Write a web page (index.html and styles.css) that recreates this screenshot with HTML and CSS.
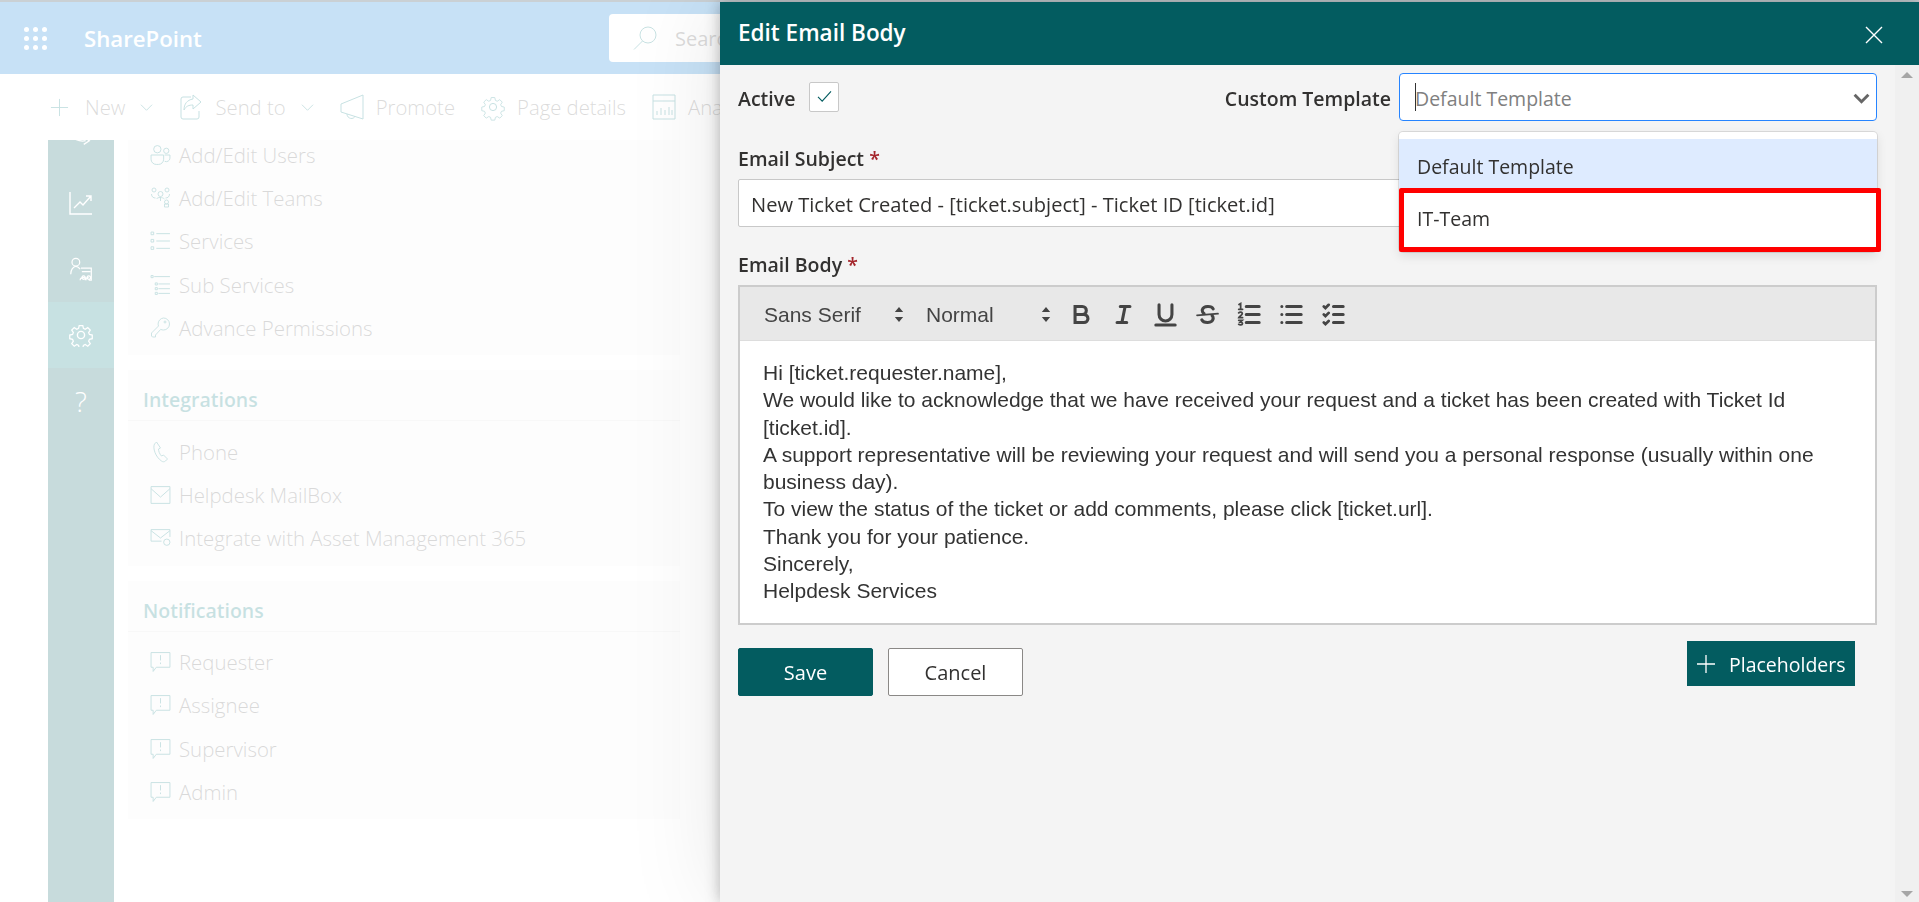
FILE: index.html
```html
<!DOCTYPE html>
<html lang="en">
<head>
<meta charset="utf-8">
<title>Edit Email Body</title>
<link rel="stylesheet" href="styles.css">
</head>
<body>
<svg class="sprite" width="0" height="0" aria-hidden="true">
  <symbol id="i-plus" viewBox="0 0 20 20"><path d="M10 1v18M1 10h18"/></symbol>
  <symbol id="i-chev" viewBox="0 0 14 14"><path d="M1 4l6 6 6-6"/></symbol>
  <symbol id="i-send" viewBox="0 0 24 28"><path d="M12 4H4a2 2 0 0 0-2 2v18a2 2 0 0 0 2 2h14a2 2 0 0 0 2-2v-6"/><path d="M14 2l8 7-8 7v-4c-4 0-7 1-9 5 0-6 3-10 9-11z"/></symbol>
  <symbol id="i-promote" viewBox="0 0 24 28"><path d="M23 2v24L1 19v-8z"/><path d="M7 21c0 5 7 6 8 2"/></symbol>
  <symbol id="i-gear" viewBox="0 0 24 24"><circle cx="12" cy="12" r="3.6"/><path d="M10 1.5h4l.7 3.2 2 .9 2.8-1.8 2.800 2.800-1.800 2.800.9 2 3.100.7v4l-3.100.7-.9 2 1.800 2.800-2.800 2.800-2.800-1.800-2 .9-.7 3.100h-4l-.7-3.100-2-.9-2.800 1.800-2.800-2.800 1.800-2.800-.9-2-3.100-.7v-4l3.100-.7.9-2-1.800-2.800 2.800-2.800 2.800 1.800 2-.9z" transform="translate(1.200 1.200) scale(.9)"/></symbol>
  <symbol id="i-analytics" viewBox="0 0 24 28"><path d="M1 2h22v24H1zM1 8h22"/><path d="M5 22v-4M9 22v-7M13 22v-5M17 22v-8M20 22v-5"/></symbol>
  <symbol id="i-users" viewBox="0 0 20 20"><circle cx="7" cy="4.500" r="3.500"/><circle cx="15.500" cy="6" r="2.500"/><path d="M1 10h12v4a5 5 0 0 1-5 5H6a5 5 0 0 1-5-5zM14 10h5v3a3.500 3.500 0 0 1-5 3"/></symbol>
  <symbol id="i-teams" viewBox="0 0 20 22"><circle cx="3.500" cy="3" r="2"/><circle cx="16.500" cy="3" r="2"/><circle cx="10" cy="7" r="2.500"/><path d="M1 7c0 3 2 4 4 4M19 7c0 3-2 4-4 4M6 12c1-2 6-2 8 0M10 10v4"/><circle cx="16" cy="15" r="2"/><path d="M14 20h4v-3h-4z"/></symbol>
  <symbol id="i-list" viewBox="0 0 20 20"><path d="M6 3h13M6 10h13M6 17h13"/><path d="M1 1.500h2.500V4H1zM1 8.500h2.500V11H1zM1 15.500h2.500V18H1z"/></symbol>
  <symbol id="i-sublist" viewBox="0 0 20 20"><path d="M4 2h15M8 9h11M8 13.500h11M8 18h11"/><path d="M1 1h2v2H1zM5 8h2v2H5zM5 12.500h2v2H5zM5 17h2v2H5z"/></symbol>
  <symbol id="i-key" viewBox="0 0 20 22"><path d="M13 1a6 6 0 0 1 0 12c-1 0-2-.2-2.800-.6L5 18v2H2l-1-1v-3l7-7c-.3-.8-.4-1.400-.4-2A6 6 0 0 1 13 1z"/><circle cx="14.500" cy="5" r="1"/></symbol>
  <symbol id="i-phone" viewBox="0 0 16 22"><path d="M4 1L2 3c-2 4 1 13 7 17 1 1 3 1 4 0l2-2-4-4-2 1c-2-2-3-5-3-7l2-1z"/></symbol>
  <symbol id="i-mail" viewBox="0 0 20 18"><path d="M1 1h18v16H1z"/><path d="M1 3l9 8 9-8"/></symbol>
  <symbol id="i-mailgear" viewBox="0 0 20 18"><path d="M11 12H1V1h18v7"/><path d="M1 2l9 7 9-7"/><circle cx="16" cy="13" r="3"/></symbol>
  <symbol id="i-chat" viewBox="0 0 20 20"><path d="M1 1h18v14H6l-3 4v-4H1z"/><path d="M10 3.500v5M10 10.500v1.500"/></symbol>
  <symbol id="i-chart" viewBox="0 0 24 24"><path d="M1 1v22h22"/><path d="M5 17l6-6 3 3 8-9M17 5h5v5"/></symbol>
  <symbol id="i-person" viewBox="0 0 26 28"><circle cx="7" cy="6" r="4.500"/><path d="M1 20c0-5 3-9 6-9 2 0 3 1 5 3"/><path d="M13 13h12v14h-3M14 17h10M16 22a2 2 0 1 0 .01 0M22 22a2 2 0 1 0 .01 0M12 27c0-2 2-3 4-3s3 1 3 3M18 27c0-2 2-3 4-3"/></symbol>
  <symbol id="i-route" viewBox="0 0 26 20"><path d="M4 0C1 3 1 9 6 12c4 2 8 3 12 2M16 10l6 4-6 4"/><path d="M20 4c2 1 3 2 3 4"/></symbol>
</svg>

<div class="page">
  <div class="strip"></div>
  <header class="suite">
    <div class="waffle"><i></i><i></i><i></i><i></i><i></i><i></i><i></i><i></i><i></i></div>
    <span class="brand">SharePoint</span>
    <div class="search">
      <svg class="search-icon" viewBox="0 0 24 24"><circle cx="15" cy="9" r="8"/><path d="M9.500 15L1 23.500"/></svg>
      <span>Search</span>
    </div>
  </header>
  <nav class="cmd">
    <span class="cmd-item cmd-new"><svg class="ic-cmd ic-plus"><use href="#i-plus"/></svg>New<svg class="ic-chev"><use href="#i-chev"/></svg></span>
    <span class="cmd-item"><svg class="ic-cmd"><use href="#i-send"/></svg>Send to<svg class="ic-chev"><use href="#i-chev"/></svg></span>
    <span class="cmd-item"><svg class="ic-cmd"><use href="#i-promote"/></svg>Promote</span>
    <span class="cmd-item"><svg class="ic-cmd"><use href="#i-gear"/></svg>Page details</span>
    <span class="cmd-item"><svg class="ic-cmd"><use href="#i-analytics"/></svg>Analytics</span>
  </nav>
  <div class="main">
    <div class="rail">
      <div class="rail-in">
        <div class="rail-item"><svg><use href="#i-route"/></svg></div>
        <div class="rail-item"><svg><use href="#i-chart"/></svg></div>
        <div class="rail-item"><svg><use href="#i-person"/></svg></div>
        <div class="rail-item active"><svg><use href="#i-gear"/></svg></div>
        <div class="rail-item q">?</div>
      </div>
    </div>
    <div class="settings">
      <section class="card card-first">
        <div class="row"><svg><use href="#i-users"/></svg>Add/Edit Users</div>
        <div class="row"><svg><use href="#i-teams"/></svg>Add/Edit Teams</div>
        <div class="row"><svg><use href="#i-list"/></svg>Services</div>
        <div class="row"><svg><use href="#i-sublist"/></svg>Sub Services</div>
        <div class="row"><svg><use href="#i-key"/></svg>Advance Permissions</div>
      </section>
      <section class="card">
        <h3>Integrations</h3>
        <div class="row"><svg><use href="#i-phone"/></svg>Phone</div>
        <div class="row"><svg><use href="#i-mail"/></svg>Helpdesk MailBox</div>
        <div class="row"><svg><use href="#i-mailgear"/></svg>Integrate with Asset Management 365</div>
      </section>
      <section class="card">
        <h3>Notifications</h3>
        <div class="row"><svg><use href="#i-chat"/></svg>Requester</div>
        <div class="row"><svg><use href="#i-chat"/></svg>Assignee</div>
        <div class="row"><svg><use href="#i-chat"/></svg>Supervisor</div>
        <div class="row"><svg><use href="#i-chat"/></svg>Admin</div>
      </section>
    </div>
  </div>
</div>
<div class="veil"></div>

<aside class="panel">
  <header class="panel-head">
    <h2>Edit Email Body</h2>
    <svg class="close" viewBox="0 0 18 18"><path d="M1 1l16 16M17 1L1 17"/></svg>
  </header>
  <div class="panel-body">
    <div class="form">
      <div class="top-row">
        <div class="active-field">
          <span class="lbl lbl-top">Active</span>
          <span class="checkbox"><svg viewBox="0 0 16 14"><path d="M1 7.500l4.500 4.500L15 1.500"/></svg></span>
        </div>
        <div class="template-field">
          <span class="lbl lbl-top">Custom Template</span>
          <div class="select">
            <span class="caret"></span><span class="placeholder">Default Template</span>
            <svg class="select-chev" viewBox="0 0 16 10"><path d="M1.500 1.500L8 8l6.500-6.500"/></svg>
            <div class="menu">
              <div class="opt opt-hi">Default Template</div>
              <div class="opt opt-red">IT-Team</div>
            </div>
          </div>
        </div>
      </div>
      <label class="lbl lbl-subject">Email Subject <em>*</em></label>
      <div class="textbox">New Ticket Created - [ticket.subject] - Ticket ID [ticket.id]</div>
      <label class="lbl lbl-body">Email Body <em>*</em></label>
      <div class="editor">
        <div class="toolbar">
          <span class="picker picker-font">Sans Serif<svg viewBox="0 0 12 20"><path d="M6 1l5 6H1zM6 19l5-6H1z"/></svg></span>
          <span class="picker picker-size">Normal<svg viewBox="0 0 12 20"><path d="M6 1l5 6H1zM6 19l5-6H1z"/></svg></span>
          <svg class="tb" viewBox="0 0 18 18"><path d="M5 4h4.500a2.500 2.500 0 0 1 0 5H5zM5 9h5.500a2.500 2.500 0 0 1 0 5H5z"/></svg>
          <svg class="tb" viewBox="0 0 18 18"><path d="M7 4h6M5 14h6M8 14l2-10"/></svg>
          <svg class="tb" viewBox="0 0 18 18"><path d="M5 3v6a4 4 0 0 0 8 0V3M3 15.500h12"/></svg>
          <svg class="tb" viewBox="0 0 18 18"><path class="thin" d="M15.500 8.500l-13 1"/><path d="M12.500 5.500C11.500 3.500 6.500 3.500 5.800 6c-.2 1 .2 1.800 1 2.400M5.500 12.300c1 2.200 6.500 2.400 7-.6.100-.8-.1-1.500-.6-2"/></svg>
          <svg class="tb" viewBox="0 0 18 18"><path d="M7 4h8M7 9h8M7 14h8"/><path class="thin" d="M2.500 2.800l1-.6v3.600M2.300 5.800h2.400M2.300 8c.8-.8 2.300-.5 2.200.5 0 .9-2 1.500-2.200 2.500h2.400M2.300 12.600h2.200l-1.200 1.200c1 0 1.400.4 1.300 1-.1.700-1.500.9-2.300.3"/></svg>
          <svg class="tb" viewBox="0 0 18 18"><path d="M6 4h9M6 9h9M6 14h9M3 4h.01M3 9h.01M3 14h.01"/></svg>
          <svg class="tb" viewBox="0 0 18 18"><path d="M9 4h6M9 9h6M9 14h6"/><path class="chk" d="M3 4l1 1 2-2M3 9l1 1 2-2M3 14l1 1 2-2"/></svg>
        </div>
        <div class="ql">
          <p>Hi [ticket.requester.name],</p>
          <p>We would like to acknowledge that we have received your request and a ticket has been created with Ticket Id [ticket.id].</p>
          <p>A support representative will be reviewing your request and will send you a personal response (usually within one business day).</p>
          <p>To view the status of the ticket or add comments, please click [ticket.url].</p>
          <p>Thank you for your patience.</p>
          <p>Sincerely,</p>
          <p>Helpdesk Services</p>
        </div>
      </div>
      <div class="actions">
        <div class="btns">
          <button class="btn btn-save">Save</button>
          <button class="btn btn-cancel">Cancel</button>
        </div>
        <button class="btn-ph"><svg viewBox="0 0 18 18"><path d="M9 0v18M0 9h18"/></svg>Placeholders</button>
      </div>
    </div>
    <div class="scrollbar"><i class="arrow-up"></i><i class="arrow-down"></i></div>
  </div>
</aside>
</body>
</html>
```

FILE: styles.css
```css
* { box-sizing: border-box; }
html, body { margin: 0; height: 100%; overflow: hidden; }
body { font-family: "Open Sans", "Noto Sans", sans-serif; background: #fff; color: #323130; }
.sprite { position: absolute; }
svg { fill: none; stroke: currentColor; display: block; }

.page { height: 902px; display: flex; flex-direction: column; }
.strip { height: 2px; background: #0f2a3c; }
.suite { height: 72px; background: #0078d4; display: flex; align-items: center; color: #fff; }
.waffle { margin-left: 24px; width: 24px; display: grid; grid-template-columns: repeat(3, 5px); gap: 4px; }
.waffle i { width: 5px; height: 5px; border-radius: 50%; background: #fff; }
.brand { margin-left: 36px; width: 525px; font-size: 22.200px; font-weight: 600; }
.search { width: 111px; height: 48px; background: #fff; border-radius: 4px 0 0 4px; display: flex; align-items: center; padding-left: 24px; color: #605e5c; font-size: 20px; overflow: hidden; white-space: nowrap; }
.search-icon { width: 24px; height: 24px; margin-right: 18px; color: #03787c; stroke-width: 1; flex: none; }

.cmd { width: 720px; height: 66px; overflow: hidden; display: flex; align-items: center; padding: 0 0 0 50px; font-size: 20.300px; font-weight: 300; color: #605e5c; gap: 26px; }
.cmd-item { display: flex; align-items: center; white-space: nowrap; flex: none; }
.ic-cmd { width: 24px; height: 28px; margin-right: 12px; color: #03787c; stroke-width: 1; }
.ic-plus { width: 19px; height: 19px; margin-right: 16px; }
.ic-chev { width: 13px; height: 13px; margin-left: 15px; color: #03787c; stroke-width: 1; }

.main { flex: 1; display: flex; min-height: 0; }
.rail { margin-left: 48px; width: 66px; background: #045c60; overflow: hidden; flex: none; }
.rail-in { margin-top: -36px; }
.rail-item { height: 66px; display: flex; align-items: center; justify-content: center; color: #fff; }
.rail-item svg { width: 24px; height: 24px; stroke-width: 1.400; }
.rail-item.active { background: #03787c; }
.rail-item.q { font-size: 28px; font-weight: 300; }

.settings { width: 552px; margin-left: 14px; display: flex; flex-direction: column; gap: 15px; }
.card { background: #f4f4f4; padding-bottom: 6px; }
.card-first { height: 215px; overflow: hidden; }
.card-first .row:first-child { margin-top: -6.600px; }
.card h3 { margin: 0; height: 51px; padding: 16px 0 0 15px; font-size: 19.500px; font-weight: 600; color: #03787c; border-bottom: 1px solid #ddd; line-height: 28px; }
.card h3 + .row { margin-top: 9px; }
.row { height: 43.200px; display: flex; align-items: center; padding-left: 22px; font-size: 20.400px; font-weight: 300; color: #555; white-space: nowrap; }
.row svg { width: 21px; height: 22px; margin-right: 8px; color: #03787c; stroke-width: .9; flex: none; }

.veil { position: fixed; inset: 0; background: rgba(255, 255, 255, .78); }

.panel { position: fixed; left: 720px; top: 2px; right: 0; bottom: 0; display: flex; flex-direction: column; background: #f4f4f4; box-shadow: 0 0 14px rgba(0, 0, 0, .28), 0 0 90px rgba(0, 0, 0, .1); }
.panel-head { height: 63px; flex: none; background: #035c60; color: #fff; display: flex; align-items: center; justify-content: space-between; padding: 0 36px 2px 18px; }
.panel-head h2 { margin: 0; font-size: 22.500px; font-weight: 600; }
.close { width: 18px; height: 18px; stroke-width: 1.400; margin-top: 4px; }
.panel-body { flex: 1; display: flex; min-height: 0; }
.form { flex: 1; padding: 8px 18px 0; min-width: 0; }
.scrollbar { width: 24px; background: #f0f0f0; position: relative; flex: none; }
.arrow-up, .arrow-down { position: absolute; left: 6px; width: 0; height: 0; border: 6px solid transparent; }
.arrow-up { top: 7px; border-bottom-color: #a6a6a6; border-top-width: 0; }
.arrow-down { bottom: 5px; border-top-color: #a6a6a6; border-bottom-width: 0; }

.lbl { font-size: 19.500px; font-weight: 600; color: #323130; line-height: 28px; display: block; }
.lbl em { color: #a4262c; font-style: normal; }
.lbl-top { padding-top: 3px; }
.top-row { height: 48px; display: flex; align-items: center; justify-content: space-between; }
.active-field { display: flex; align-items: center; }
.checkbox { margin-left: 14px; width: 30px; height: 30px; background: #fff; border: 1px solid #c8c8c8; border-radius: 2px; display: flex; align-items: center; justify-content: center; color: #035c60; margin-top: -1px; }
.checkbox svg { width: 15px; height: 13px; stroke-width: 1.200; }
.template-field { display: flex; align-items: center; gap: 8px; }
.select { position: relative; width: 478px; height: 48px; background: #fff; border: 1px solid #2684ff; border-radius: 4px; display: flex; align-items: center; padding-left: 15px; font-size: 19.500px; color: #808080; }
.caret { width: 1px; height: 28px; background: #333; flex: none; }
.placeholder { margin-left: -1px; padding-top: 2px; }
.select-chev { position: absolute; right: 6px; top: 19px; width: 17px; height: 11px; color: #666; stroke-width: 2.800; }
.menu { position: absolute; left: -1px; right: -1px; top: 58px; background: #fff; border-radius: 4px; padding-top: 7px; box-shadow: 0 0 0 1px rgba(0, 0, 0, .1), 0 4px 11px rgba(0, 0, 0, .1); color: #323130; z-index: 2; }
.opt { padding-left: 18px; display: flex; align-items: center; }
.opt-hi { height: 49px; background: #deebff; padding-top: 6px; }
.opt-red { height: 64px; margin-right: -4px; padding-left: 13px; background: #fff; border: 5px solid #f00; border-radius: 2px; padding-bottom: 4px; }

.lbl-subject { padding-top: 1px; margin-top: 23px; margin-bottom: 6px; }
.textbox { height: 48px; background: #fff; border: 1px solid #c8c8c8; border-radius: 2px; display: flex; align-items: center; padding: 2px 0 0 12px; font-size: 20.100px; color: #323130; }
.lbl-body { margin-top: 24px; margin-bottom: 6px; }

.editor { height: 340px; border: 2px solid #ccc; background: #fff; }
.toolbar { height: 54px; background: #e8e8e8; border-bottom: 1px solid #ddd; display: flex; align-items: center; padding: 2px 0 0 24px; font-family: "Liberation Sans", Arial, sans-serif; font-size: 21px; color: #444; }
.picker { display: flex; align-items: center; flex: none; }
.picker svg { width: 10px; height: 17px; fill: #444; stroke: none; }
.picker-font { width: 162px; }
.picker-font svg { margin-left: 33px; }
.picker-size { width: 141px; }
.picker-size svg { margin-left: 47px; }
.tb { width: 29px; height: 29px; margin-right: 13px; color: #444; stroke-width: 1.900; stroke-linecap: round; flex: none; }
.tb .thin { stroke-width: 1.100; }
.tb .chk { stroke-width: 1.700; }
.ql { padding: 18px 22px 0 23px; font-family: "Liberation Sans", Arial, sans-serif; font-size: 21px; line-height: 27.300px; color: #333; }
.ql p { margin: 0; }

.actions { display: flex; justify-content: space-between; align-items: flex-start; margin-top: 16px; padding-right: 22px; }
.btns { display: flex; gap: 15px; margin-top: 7px; }
.btn { width: 135px; height: 48px; border-radius: 2px; font: inherit; font-size: 20px; font-weight: 500; padding: 0; }
.btn-save { background: #035c60; color: #fff; border: 1px solid #035c60; }
.btn-cancel { background: #fff; color: #323130; border: 1px solid #8a8886; }
.btn-ph { width: 168px; height: 45px; background: #035c60; color: #fff; border: 0; display: flex; align-items: center; padding: 2px 0 0 10px; font: inherit; font-size: 19.500px; }
.btn-ph svg { width: 18px; height: 18px; margin-right: 14px; stroke-width: 1.300; margin-top: -2px; }
```
